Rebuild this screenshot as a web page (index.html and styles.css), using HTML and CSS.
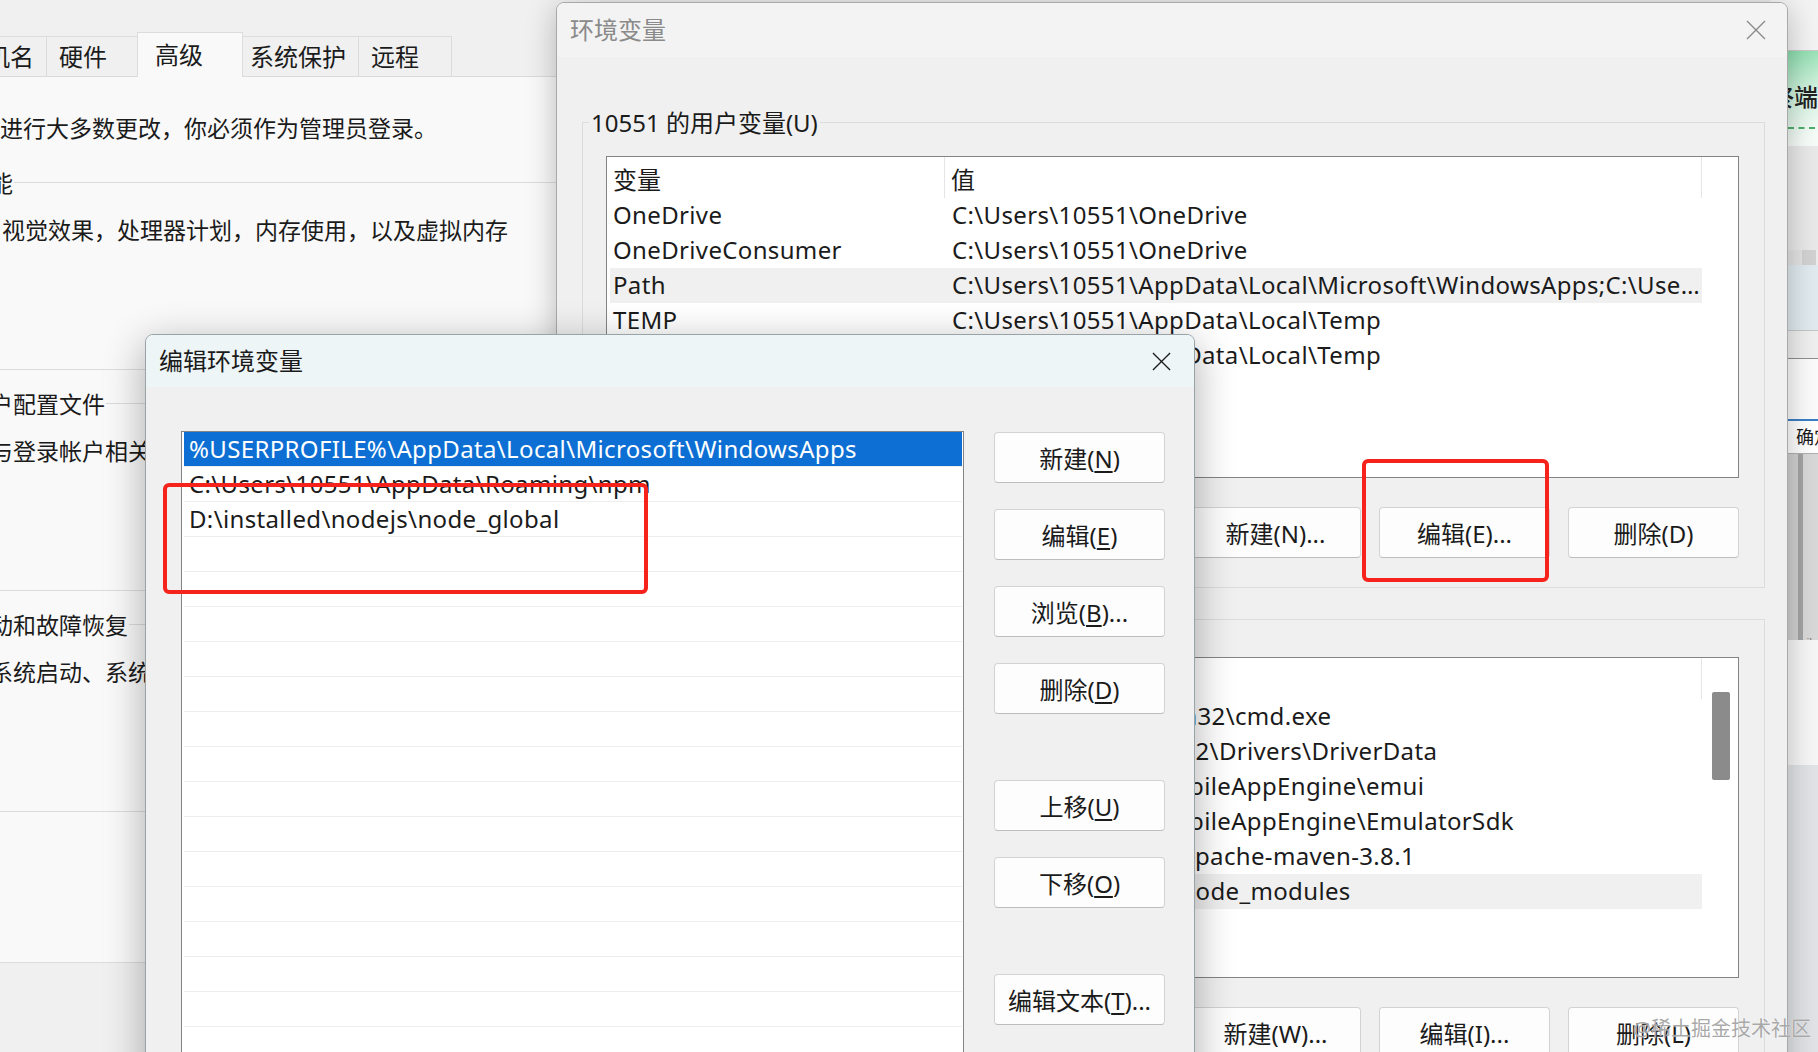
FILE: index.html
```html
<!DOCTYPE html>
<html lang="zh-CN">
<head>
    <meta charset="UTF-8">
    <title>编辑环境变量</title>
    <link rel="stylesheet" href="styles.css">
</head>
<body>
<div class="screen">

    <!-- 系统属性（后面的窗口） -->
    <section class="sys-win">
        <div class="tabs">
            <div class="tab">计算机名</div>
            <div class="tab">硬件</div>
            <div class="tab active">高级</div>
            <div class="tab tab-wide">系统保护</div>
            <div class="tab">远程</div>
        </div>
        <div class="sys-panel">
            <p class="sys-note">要进行大多数更改，你必须作为管理员登录。</p>
            <div class="sys-group">
                <span class="group-label">性能</span>
                <p class="group-text shifted">视觉效果，处理器计划，内存使用，以及虚拟内存</p>
            </div>
            <div class="sys-group">
                <span class="group-label">用户配置文件</span>
                <p class="group-text">与登录帐户相关的桌面设置</p>
            </div>
            <div class="sys-group">
                <span class="group-label">启动和故障恢复</span>
                <p class="group-text">系统启动、系统故障和调试信息</p>
            </div>
        </div>
    </section>

    <!-- 右边露出的另一个窗口 -->
    <aside class="side-win">
        <div class="sw-top"></div>
        <div class="sw-banner"><span class="sw-title">终端</span><span class="sw-dash"></span></div>
        <div class="sw-grey"></div>
        <div class="sw-tab"></div>
        <div class="sw-blue"></div>
        <div class="sw-bar"></div>
        <div class="sw-field"></div>
        <div class="sw-ok">确定</div>
        <div class="sw-scroll"><span class="sw-note">meihua</span></div>
        <div class="sw-light"></div>
        <div class="sw-bottom"></div>
    </aside>

    <!-- 环境变量 -->
    <section class="dlg env-dlg">
        <header class="titlebar">
            <span class="title">环境变量</span>
            <svg class="close" viewBox="0 0 20 20"><path d="M1 1L19 19M19 1L1 19"/></svg>
        </header>
        <div class="env-body">
            <div class="env-group">
                <span class="group-label">10551 的用户变量(U)</span>
                <div class="lv">
                    <div class="lv-body">
                        <div class="lv-head"><span class="col-name">变量</span><span class="col-value">值</span></div>
                        <div class="lv-row"><span class="col-name">OneDrive</span><span class="col-value">C:\Users\10551\OneDrive</span></div>
                        <div class="lv-row"><span class="col-name">OneDriveConsumer</span><span class="col-value">C:\Users\10551\OneDrive</span></div>
                        <div class="lv-row current"><span class="col-name">Path</span><span class="col-value">C:\Users\10551\AppData\Local\Microsoft\WindowsApps;C:\Users\10551\AppData\Roaming\npm;D:\installed\nodejs\node_global</span></div>
                        <div class="lv-row"><span class="col-name">TEMP</span><span class="col-value">C:\Users\10551\AppData\Local\Temp</span></div>
                        <div class="lv-row"><span class="col-name">TMP</span><span class="col-value">C:\Users\10551\AppData\Local\Temp</span></div>
                    </div>
                </div>
                <div class="btn-row">
                    <button class="btn">新建(N)...</button>
                    <button class="btn">编辑(E)...</button>
                    <button class="btn">删除(D)</button>
                </div>
            </div>

            <div class="env-group env-group-sys">
                <span class="group-label">系统变量(S)</span>
                <div class="lv lv-sys">
                    <div class="lv-body">
                        <div class="lv-head"><span class="col-name">变量</span><span class="col-value">值</span></div>
                        <div class="lv-row"><span class="col-name">ComSpec</span><span class="col-value">C:\WINDOWS\system32\cmd.exe</span></div>
                        <div class="lv-row"><span class="col-name">DriverData</span><span class="col-value">C:\Windows\System32\Drivers\DriverData</span></div>
                        <div class="lv-row"><span class="col-name">EMUI_HOME</span><span class="col-value">C:\Program Files\MobileAppEngine\emui</span></div>
                        <div class="lv-row"><span class="col-name">EMULATOR_SDK</span><span class="col-value">C:\Program Files\MobileAppEngine\EmulatorSdk</span></div>
                        <div class="lv-row"><span class="col-name">MAVEN_HOME</span><span class="col-value">D:\installed\maven\apache-maven-3.8.1</span></div>
                        <div class="lv-row current"><span class="col-name">NODE_PATH</span><span class="col-value">D:\installed\nodejs\node_modules</span></div>
                        <div class="lv-row"><span class="col-name">NUMBER_OF_PROCESSORS</span><span class="col-value">16</span></div>
                        <div class="lv-row"><span class="col-name">OS</span><span class="col-value">Windows_NT</span></div>
                    </div>
                    <div class="lv-scroll"><div class="lv-thumb"></div></div>
                </div>
                <div class="btn-row">
                    <button class="btn">新建(W)...</button>
                    <button class="btn">编辑(I)...</button>
                    <button class="btn">删除(L)</button>
                </div>
            </div>
        </div>
    </section>

    <!-- 编辑环境变量 -->
    <section class="dlg edit-dlg">
        <header class="titlebar">
            <span class="title">编辑环境变量</span>
            <svg class="close" viewBox="0 0 20 20"><path d="M1 1L19 19M19 1L1 19"/></svg>
        </header>
        <div class="edit-body">
            <div class="path-list">
                <div class="path-row selected">%USERPROFILE%\AppData\Local\Microsoft\WindowsApps</div>
                <div class="path-row">C:\Users\10551\AppData\Roaming\npm</div>
                <div class="path-row">D:\installed\nodejs\node_global</div>
                <div class="path-row"></div>
                <div class="path-row"></div>
                <div class="path-row"></div>
                <div class="path-row"></div>
                <div class="path-row"></div>
                <div class="path-row"></div>
                <div class="path-row"></div>
                <div class="path-row"></div>
                <div class="path-row"></div>
                <div class="path-row"></div>
                <div class="path-row"></div>
                <div class="path-row"></div>
                <div class="path-row"></div>
                <div class="path-row"></div>
                <div class="path-row"></div>
            </div>
            <div class="edit-buttons">
                <button class="btn">新建(<u>N</u>)</button>
                <button class="btn">编辑(<u>E</u>)</button>
                <button class="btn">浏览(<u>B</u>)...</button>
                <button class="btn">删除(<u>D</u>)</button>
                <button class="btn spaced">上移(<u>U</u>)</button>
                <button class="btn">下移(<u>O</u>)</button>
                <button class="btn spaced">编辑文本(<u>T</u>)...</button>
            </div>
        </div>
    </section>

    <!-- 红框标注 -->
    <div class="mark mark-edit"></div>
    <div class="mark mark-env"></div>

    <div class="watermark">@稀土掘金技术社区</div>
</div>
</body>
</html>
```

FILE: styles.css
```css
* {
    box-sizing: border-box;
}
body {
    margin: 0;
    font-family: "Noto Sans", "Noto Sans CJK SC", sans-serif;
    color: #1b1b1b;
}
p {
    margin: 0;
}
.screen {
    position: relative;
    width: 1818px;
    height: 1052px;
    overflow: hidden;
    background: #e9e9e9;
    font-size: 24px;
}

/* 系统属性 */
.sys-win {
    position: absolute;
    left: -100px;
    top: 0;
    width: 700px;
    height: 1052px;
    background: #f0f0f0;
    z-index: 1;
}
.tabs {
    display: flex;
    align-items: flex-end;
    height: 77px;
    padding-left: 25px;
    border-bottom: 1px solid #dadada;
}
.tab {
    min-width: 94px;
    height: 40px;
    padding: 0 12px;
    display: flex;
    align-items: center;
    border: 1px solid #dcdcdc;
    border-bottom: none;
    margin-right: -1px;
    background: #f0f0f0;
    line-height: 1;
}
.tab.active {
    position: relative;
    z-index: 1;
    min-width: 106px;
    height: 45px;
    margin: 0 -1px -1px -2px;
    padding-left: 17px;
    background: #f9f9f9;
}
.tab.tab-wide {
    width: 117px;
    padding: 0 12px 0 7px;
}
.sys-panel {
    height: 886px;
    background: #f9f9f9;
    border-bottom: 1px solid #dcdcdc;
    padding: 35px 20px 0 57px;
    font-size: 23px;
}
.sys-note {
    margin-left: 20px;
    line-height: 32px;
}
.sys-group {
    height: 188px;
    margin-top: 38px;
    border: 1px solid #dcdcdc;
}
.sys-group + .sys-group {
    margin-top: 33px;
}
.group-label {
    display: block;
    width: fit-content;
    margin: -16px 0 0 8px;
    padding: 0 1px;
    line-height: 32px;
    background: #f9f9f9;
}
.group-text {
    margin: 15px 0 0 32px;
    line-height: 32px;
    white-space: nowrap;
}
.group-text.shifted {
    margin-left: 44px;
}

/* 右边的窗口 */
.side-win {
    position: absolute;
    left: 1770px;
    top: 0;
    width: 60px;
    height: 1052px;
    display: flex;
    flex-direction: column;
    z-index: 0;
}
.sw-top {
    height: 51px;
    background: #f3f3f3;
    border-bottom: 1px solid #c9c9c9;
}
.sw-banner {
    height: 95px;
    padding-top: 30px;
    background: linear-gradient(160deg, #7fd9a4 0%, #c9efd8 40%, #f6fcf8 85%);
}
.sw-title {
    display: block;
    line-height: 32px;
    font-weight: 500;
    color: #222;
    white-space: nowrap;
}
.sw-dash {
    display: block;
    width: 48px;
    margin: 14px 0 0 18px;
    border-top: 2px dashed #4caf6a;
}
.sw-grey {
    height: 104px;
    background: #e9e9e9;
}
.sw-tab {
    height: 15px;
    background: linear-gradient(90deg, #e3e3e3 0 32px, #d2d2d2 32px 46px, #ececec 46px);
}
.sw-blue {
    height: 66px;
    background: #e0eaef;
    border-bottom: 1px solid #c6c6c6;
}
.sw-bar {
    height: 28px;
    background: #efefef;
    border-bottom: 1px solid #8f8f8f;
}
.sw-field {
    height: 62px;
    background: #fbfbfb;
    border-bottom: 2px solid #3b7fc4;
}
.sw-ok {
    height: 33px;
    padding-left: 26px;
    font-size: 18px;
    line-height: 33px;
    background: #fff;
    border-bottom: 1px solid #b0b0b0;
    white-space: nowrap;
}
.sw-scroll {
    height: 186px;
    padding: 166px 0 0 20px;
    background: linear-gradient(90deg, #d0d0d0 0 28px, #a3a3a3 28px 33px, #d8d8d8 33px);
}
.sw-note {
    font-size: 11px;
    color: #777;
}
.sw-light {
    height: 125px;
    background: #f6f6f6;
}
.sw-bottom {
    flex: 1;
    background: #e1e3e6;
}

/* 对话框通用 */
.dlg {
    position: absolute;
    background: #f0f0f0;
    border: 1px solid #a9a9a9;
    border-radius: 8px 8px 0 0;
    overflow: hidden;
}
.titlebar {
    display: flex;
    align-items: center;
    justify-content: space-between;
    height: 54px;
    padding: 0 21px 0 13px;
    background: #f3f3f3;
}
.title {
    line-height: 32px;
}
.close {
    width: 20px;
    height: 20px;
    fill: none;
    stroke: #8a8a8a;
    stroke-width: 1.4;
}
.btn {
    width: 171px;
    height: 51px;
    padding: 0;
    border: 1px solid #d3d3d3;
    border-bottom-color: #bdbdbd;
    border-radius: 4px;
    background: #fdfdfd;
    font: inherit;
    color: #1b1b1b;
    white-space: nowrap;
}
.btn u {
    text-underline-offset: 3px;
}

/* 环境变量 */
.env-dlg {
    left: 556px;
    top: 2px;
    width: 1232px;
    height: 1100px;
    z-index: 2;
    box-shadow: 0 6px 30px rgba(0, 0, 0, 0.25);
}
.env-dlg .title {
    color: #8a8a8a;
}
.env-body {
    padding: 0 22px 0 25px;
}
.env-group {
    margin-top: 65px;
    padding: 0 25px 29px 23px;
    border: 1px solid #dcdcdc;
}
.env-group-sys {
    margin-top: 31px;
}
.env-group .group-label {
    margin-left: -17px;
    padding: 0 2px;
    background: #f0f0f0;
}
.lv {
    display: flex;
    height: 322px;
    margin-top: 17px;
    background: #fff;
    border: 1px solid #848484;
    overflow: hidden;
}
.lv-sys {
    height: 321px;
    margin-top: 21px;
}
.lv-body {
    width: 1096px;
}
.lv-head {
    display: flex;
    height: 41px;
}
.lv-head span {
    display: flex;
    align-items: center;
    padding: 2px 0 0 6px;
    border-right: 1px solid #e5e5e5;
}
.lv-head .col-name {
    width: 338px;
}
.lv-head .col-value {
    width: 757px;
}
.lv-row {
    display: flex;
    width: 1092px;
    height: 35px;
    margin-left: 3px;
    line-height: 34px;
    letter-spacing: 0.35px;
    white-space: nowrap;
}
.lv-row .col-name {
    width: 335px;
    padding-left: 3px;
    overflow: hidden;
}
.lv-row .col-value {
    width: 757px;
    padding-left: 7px;
    overflow: hidden;
    text-overflow: ellipsis;
}
.lv-row.current {
    background: #f0f0f0;
}
.lv-scroll {
    width: 35px;
    margin-left: auto;
}
.lv-thumb {
    width: 18px;
    height: 88px;
    margin: 34px 0 0 9px;
    background: #8b8b8b;
    border-radius: 2px;
}
.btn-row {
    display: flex;
    justify-content: flex-end;
    gap: 18px;
    margin-top: 29px;
}

/* 编辑环境变量 */
.edit-dlg {
    left: 145px;
    top: 334px;
    width: 1050px;
    height: 760px;
    z-index: 3;
    border-color: #98a3a8;
    box-shadow: 0 10px 40px rgba(0, 0, 0, 0.32);
}
.edit-dlg .titlebar {
    height: 52px;
    padding-right: 23px;
    background: #edf5f6;
}
.edit-dlg .close {
    width: 19px;
    height: 19px;
    stroke: #1b1b1b;
}
.edit-body {
    display: flex;
    align-items: flex-start;
    padding: 44px 0 0 35px;
}
.path-list {
    width: 783px;
    height: 700px;
    padding: 0 1px 0 2px;
    background: #fff;
    border: 1px solid #848484;
}
.path-row {
    height: 35px;
    padding-left: 5px;
    border-bottom: 1px solid #ededed;
    line-height: 34px;
    letter-spacing: 0.35px;
    white-space: nowrap;
    overflow: hidden;
}
.path-row.selected {
    background: #0d6fd3;
    color: #fff;
}
.edit-buttons {
    display: flex;
    flex-direction: column;
    gap: 26px;
    margin: 1px 0 0 30px;
}
.edit-buttons .spaced {
    margin-top: 40px;
}

/* 标注 */
.mark {
    position: absolute;
    z-index: 4;
    border: 4px solid #f5231b;
    border-radius: 6px;
}
.mark-edit {
    left: 163px;
    top: 483px;
    width: 485px;
    height: 111px;
}
.mark-env {
    left: 1362px;
    top: 459px;
    width: 187px;
    height: 123px;
}
.watermark {
    position: absolute;
    right: 7px;
    bottom: 10px;
    z-index: 5;
    font-size: 20px;
    color: rgba(140, 140, 140, 0.75);
    text-shadow: 0 0 1px #fff;
}
```
